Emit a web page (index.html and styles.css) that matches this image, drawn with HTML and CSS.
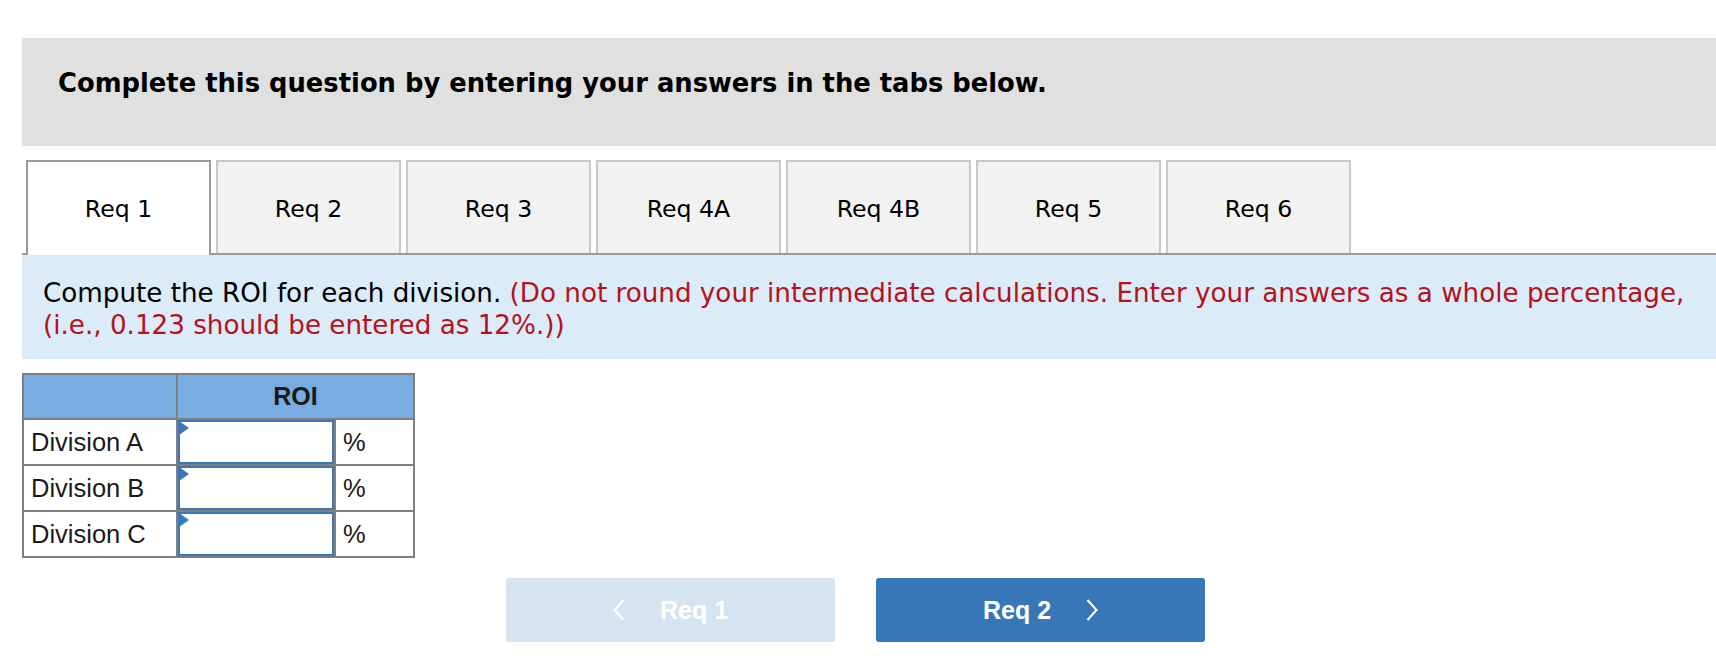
FILE: index.html
```html
<!DOCTYPE html>
<html lang="en">
<head>
<meta charset="utf-8">
<title>Complete this question</title>
<link rel="stylesheet" href="styles.css">
</head>
<body>
<div class="page">
  <div class="banner">Complete this question by entering your answers in the tabs below.</div>

  <div class="tabs">
    <div class="tab active">Req 1</div>
    <div class="tab">Req 2</div>
    <div class="tab">Req 3</div>
    <div class="tab">Req 4A</div>
    <div class="tab">Req 4B</div>
    <div class="tab">Req 5</div>
    <div class="tab">Req 6</div>
  </div>

  <div class="prompt">Compute the ROI for each division. <span class="note">(Do not round your intermediate calculations. Enter your answers as a whole percentage, (i.e., 0.123 should be entered as 12%.))</span></div>

  <table class="grid">
    <thead>
      <tr>
        <th class="blank"></th>
        <th class="head" colspan="2">ROI</th>
      </tr>
    </thead>
    <tbody>
      <tr>
        <td class="label">Division A</td>
        <td class="entry"><div class="field"><span class="flag"></span><input type="text" aria-label="Division A ROI"></div></td>
        <td class="unit">%</td>
      </tr>
      <tr>
        <td class="label">Division B</td>
        <td class="entry"><div class="field"><span class="flag"></span><input type="text" aria-label="Division B ROI"></div></td>
        <td class="unit">%</td>
      </tr>
      <tr>
        <td class="label">Division C</td>
        <td class="entry"><div class="field"><span class="flag"></span><input type="text" aria-label="Division C ROI"></div></td>
        <td class="unit">%</td>
      </tr>
    </tbody>
  </table>

  <div class="nav">
    <button class="btn prev" type="button">
      <svg class="chev" width="12" height="22" viewBox="0 0 12 22"><polyline points="10.5,1 1.5,11 10.5,21" fill="none" stroke="#fff" stroke-width="2"/></svg>
      <span>Req 1</span>
    </button>
    <button class="btn next" type="button">
      <span>Req 2</span>
      <svg class="chev" width="12" height="22" viewBox="0 0 12 22"><polyline points="1.5,1 10.5,11 1.5,21" fill="none" stroke="#fff" stroke-width="2"/></svg>
    </button>
  </div>
</div>
</body>
</html>
```

FILE: styles.css
```css
html, body {
  margin: 0;
  padding: 0;
  background: #fff;
}

.page {
  margin-left: 22px;
  padding-top: 38px;
  font-family: "DejaVu Sans", Verdana, sans-serif;
  color: #000;
}

.banner {
  box-sizing: border-box;
  height: 108px;
  background: #e0e0e0;
  padding: 30px 0 0 36px;
  font-weight: bold;
  font-size: 25.8px;
  line-height: 30px;
}

.tabs {
  display: flex;
  align-items: flex-start;
  gap: 5px;
  margin-top: 14px;
  padding-left: 4px;
  height: 93px;
  border-bottom: 2px solid #9a9a9a;
}

.tab {
  box-sizing: border-box;
  width: 185px;
  height: 93px;
  display: flex;
  align-items: center;
  justify-content: center;
  padding-top: 3px;
  background: #f2f2f2;
  border: 2px solid #c8c8c8;
  border-bottom: none;
  font-size: 23.6px;
}

.tab.active {
  height: 95px;
  background: #fff;
  border-color: #9a9a9a;
  padding-top: 1px;
}

.prompt {
  box-sizing: border-box;
  height: 104px;
  background: #dbebf8;
  padding: 22px 0 0 21px;
  font-size: 26.2px;
  line-height: 32px;
}

.note {
  color: #b5121b;
}

.grid {
  margin-top: 14px;
  border-collapse: separate;
  border-spacing: 0;
  border-top: 2px solid #7f7f7f;
  border-left: 2px solid #7f7f7f;
  font-family: "Liberation Sans", Arial, sans-serif;
  font-size: 25.5px;
  color: #1a1a1a;
}

.grid th,
.grid td {
  padding: 0;
  border-right: 2px solid #7f7f7f;
  border-bottom: 2px solid #7f7f7f;
}

.grid th {
  height: 43px;
  background: #79ade2;
  font-weight: bold;
  font-size: 25px;
}

.grid td {
  height: 44px;
}

.grid .blank {
  width: 152px;
}

.grid .label {
  width: 145px;
  padding-left: 7px;
}

.grid .entry {
  width: 156px;
}

.grid .unit {
  width: 70px;
  padding-left: 7px;
}

.field {
  position: relative;
  height: 44px;
}

.field input {
  box-sizing: border-box;
  display: block;
  width: 100%;
  height: 44px;
  margin: 0;
  border: 2px solid #3a76b8;
  background: #fff;
  outline: none;
  font: inherit;
  padding: 0 6px;
}

.flag {
  position: absolute;
  left: 1px;
  top: 1px;
  width: 0;
  height: 0;
  border-top: 7px solid transparent;
  border-bottom: 7px solid transparent;
  border-left: 10px solid #3a76b8;
}

.nav {
  display: flex;
  gap: 41px;
  margin-top: 20px;
  padding-left: 484px;
}

.btn {
  box-sizing: border-box;
  width: 329px;
  height: 64px;
  border: none;
  border-radius: 3px;
  display: flex;
  align-items: center;
  justify-content: center;
  gap: 35px;
  font-family: "Liberation Sans", Arial, sans-serif;
  font-weight: bold;
  font-size: 25px;
  color: #fff;
  padding: 0;
}

.btn.prev {
  background: #d6e3f1;
}

.btn.next {
  background: #3777b8;
}

.chev {
  display: block;
}
```
